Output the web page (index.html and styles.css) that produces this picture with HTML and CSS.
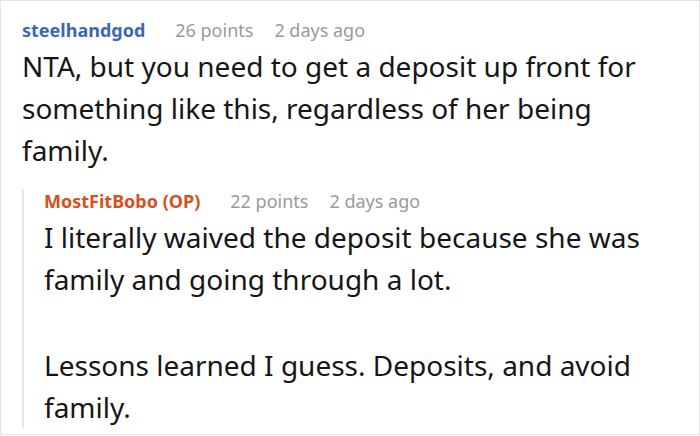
FILE: index.html
```html
<!DOCTYPE html>
<html>
<head>
<meta charset="utf-8">
<link rel="stylesheet" href="styles.css">
</head>
<body>
<div class="thread">
  <div class="comment">
    <div class="meta">
      <span class="author">steelhandgod</span>
      <span class="points">26 points</span>
      <span class="time">2 days ago</span>
    </div>
    <div class="body">
      <p>NTA, but you need to get a deposit up front for something like this, regardless of her being family.</p>
    </div>
  </div>
  <div class="reply">
    <div class="meta">
      <span class="author op">MostFitBobo (OP)</span>
      <span class="points">22 points</span>
      <span class="time">2 days ago</span>
    </div>
    <div class="body">
      <p>I literally waived the deposit because she was family and going through a lot.</p>
      <p>Lessons learned I guess. Deposits, and avoid family.</p>
    </div>
  </div>
</div>
</body>
</html>
```
FILE: styles.css
```css
html, body {
  margin: 0;
  padding: 0;
  background: #fff;
}
.thread {
  box-sizing: border-box;
  width: 700px;
  height: 435px;
  border: 1px solid #e4e4e4;
  padding: 17px 39px 0 21px;
  overflow: hidden;
  font-family: "Noto Sans", "Open Sans", sans-serif;
  color: #161616;
}
.meta {
  display: flex;
  align-items: baseline;
  font-size: 18px;
  line-height: 24px;
  white-space: nowrap;
}
.author {
  font-size: 18px;
  font-weight: 700;
  color: #3868b6;
  margin-right: 30px;
}
.author.op {
  color: #d5511d;
}
.points {
  color: #9a9a9a;
  margin-right: 21px;
}
.time {
  color: #9a9a9a;
}
.body {
  margin-top: 3px;
  font-size: 28px;
  line-height: 42px;
}
.body p {
  margin: 0;
}
.body p + p {
  margin-top: 44px;
}
.reply {
  margin-top: 30px;
  border-left: 2px solid #e6e6e6;
  padding-left: 20px;
}
.reply .meta {
  margin-top: -12px;
}
.reply .body {
  margin-bottom: -11px;
}
```
